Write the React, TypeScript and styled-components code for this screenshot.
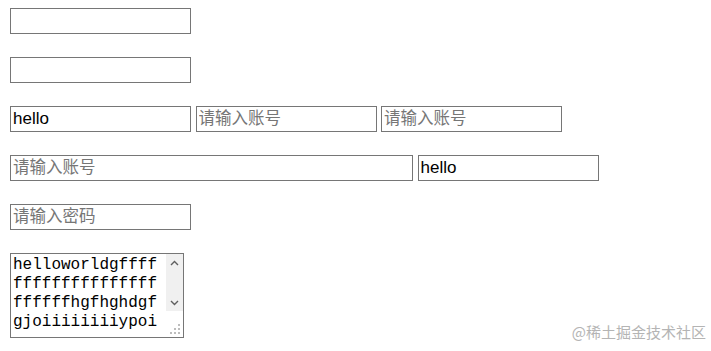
import React from 'react'
import styled, { createGlobalStyle } from 'styled-components'

const GlobalStyle = createGlobalStyle`
  html, body {
    margin: 0;
    padding: 0;
    background: #fff;
  }
  body {
    font-family: 'Liberation Sans', Arial, sans-serif;
  }
`

const longText =
  'helloworldgffff' +
  'fffffffffffffff' +
  'ffffffhgfhghdgf' +
  'gjoiiiiiiiiypoi'

const Chevron = ({ up }: { up?: boolean }) => (
  <svg width='9' height='6' viewBox='0 0 9 6'>
    <path
      d={up ? 'M1 5 L4.5 1.5 L8 5' : 'M1 1 L4.5 4.5 L8 1'}
      fill='none'
      stroke='#5f5f5f'
      strokeWidth='1.4'
    />
  </svg>
)

const App = () => {
  return (
    <Page>
      <GlobalStyle />
      <Row>
        <TextInput type='text' />
      </Row>
      <Row>
        <TextInput type='text' />
      </Row>
      <Row>
        <TextInput type='text' defaultValue='hello' />
        <TextInput type='text' placeholder='请输入账号' />
        <TextInput type='text' placeholder='请输入账号' />
      </Row>
      <Row>
        <TextInput type='text' placeholder='请输入账号' $wide />
        <TextInput type='text' defaultValue='hello' />
      </Row>
      <Row>
        <TextInput type='password' placeholder='请输入密码' />
      </Row>
      <Row>
        <MemoBox>
          <Memo defaultValue={longText} />
          <ScrollTrack>
            <ArrowButton>
              <Chevron up />
            </ArrowButton>
            <ArrowButton>
              <Chevron />
            </ArrowButton>
          </ScrollTrack>
          <Grip>
            <i />
            <i />
            <i />
            <i />
            <i />
            <i />
          </Grip>
        </MemoBox>
      </Row>
      <Watermark>@稀土掘金技术社区</Watermark>
    </Page>
  )
}

export default App

const Page = styled.div`
  position: relative;
  width: 711px;
  height: 351px;
  box-sizing: border-box;
  padding: 8px 0 0 10px;
  display: flex;
  flex-direction: column;
  gap: 23px;
  overflow: hidden;
`

const Row = styled.div`
  display: flex;
  flex-direction: row;
  align-items: flex-start;
  gap: 4.5px;
`

const TextInput = styled.input<{ $wide?: boolean }>`
  box-sizing: border-box;
  width: ${(p) => (p.$wide ? '403px' : '181px')};
  height: 26px;
  margin: 0;
  padding: 1px 2px;
  border: 1px solid #767676;
  border-radius: 0;
  outline: none;
  background: #fff;
  color: #000;
  font-family: 'Liberation Sans', Arial, 'Noto Sans CJK SC', sans-serif;
  font-size: 17px;

  &::placeholder {
    color: #767676;
    font-family: 'Noto Sans CJK SC', sans-serif;
    font-size: 16.5px;
  }
`

const MemoBox = styled.div`
  position: relative;
  width: 174px;
  height: 85px;
`

const Memo = styled.textarea`
  box-sizing: border-box;
  display: block;
  width: 174px;
  height: 85px;
  margin: 0;
  padding: 2px 19px 2px 2px;
  border: 1px solid #767676;
  border-radius: 0;
  outline: none;
  resize: none;
  overflow: hidden;
  word-break: break-all;
  font-family: 'Liberation Mono', 'Courier New', monospace;
  font-size: 16px;
  line-height: 19px;
  color: #000;
`

const ScrollTrack = styled.div`
  position: absolute;
  top: 1px;
  right: 1px;
  width: 17px;
  height: 57px;
  background: #f0f0f0;
  display: flex;
  flex-direction: column;
  justify-content: space-between;
`

const ArrowButton = styled.div`
  height: 17px;
  display: flex;
  align-items: center;
  justify-content: center;
`

const Grip = styled.div`
  position: absolute;
  right: 4px;
  bottom: 4px;
  width: 10px;
  height: 10px;
  display: grid;
  grid-template-columns: repeat(3, 2px);
  grid-template-rows: repeat(3, 2px);
  gap: 2px;

  i {
    width: 2px;
    height: 2px;
    background: #bdbdbd;
  }
  i:nth-child(1) { grid-column: 3; grid-row: 1; }
  i:nth-child(2) { grid-column: 2; grid-row: 2; }
  i:nth-child(3) { grid-column: 3; grid-row: 2; }
  i:nth-child(4) { grid-column: 1; grid-row: 3; }
  i:nth-child(5) { grid-column: 2; grid-row: 3; }
  i:nth-child(6) { grid-column: 3; grid-row: 3; }
`

const Watermark = styled.span`
  position: absolute;
  right: 5px;
  bottom: 9px;
  font-family: 'Noto Sans CJK SC', sans-serif;
  font-size: 15px;
  color: #b4b4b4;
`
